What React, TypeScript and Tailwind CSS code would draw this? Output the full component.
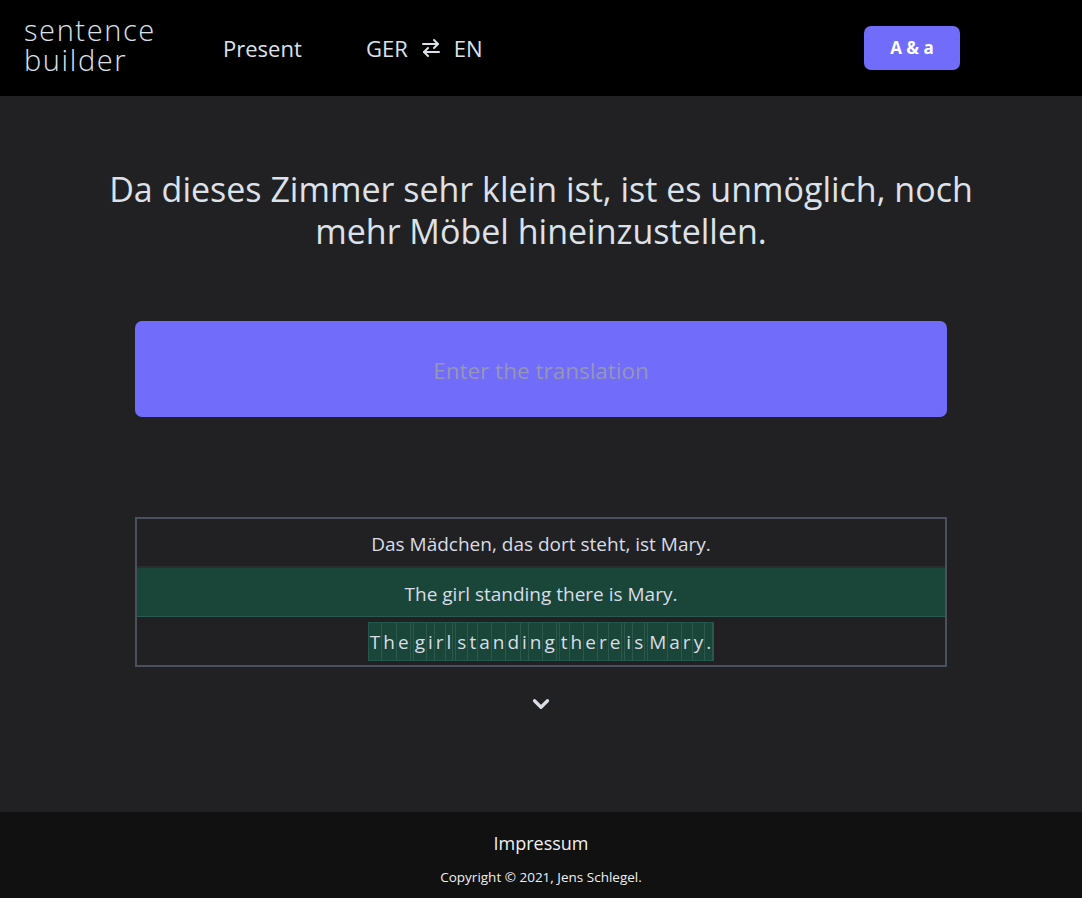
import React from "react";

const sentence = "The girl standing there is Mary.";

export default function App() {
  return (
    <div className="min-h-[898px] flex flex-col bg-[#212123] text-[#d8dde6]" style={{ fontFamily: '"Open Sans", "Noto Sans", sans-serif' }}>
      <header className="h-[96px] bg-black flex items-center shrink-0">
        <div className="ml-[24px] w-[199px] leading-[30px] text-[29px] font-light text-[#dde2ea] tracking-[1.6px] pb-[6px]" style={{ fontFamily: '"Open Sans", sans-serif' }}>
          <div>sentence</div>
          <div>builder</div>
        </div>
        <div className="text-[22px] text-[#dde2ea] w-[143px]">Present</div>
        <div className="flex items-center text-[22px] text-[#dde2ea] gap-[11px]">
          <span>GER</span>
          <svg width="24" height="24" viewBox="0 0 24 24" fill="none" stroke="currentColor" strokeWidth="2" strokeLinecap="round" strokeLinejoin="round">
            <path d="M4 8h15" />
            <path d="M15 4l4 4-4 4" />
            <path d="M20 16H5" />
            <path d="M9 12l-4 4 4 4" />
          </svg>
          <span>EN</span>
        </div>
        <button className="ml-auto mr-[122px] w-[96px] h-[44px] rounded-[7px] bg-[#716cf9] text-white font-bold text-[17px]">A &amp; a</button>
      </header>

      <main className="flex-1 flex flex-col items-center">
        <h1 className="mt-[72px] text-[34px] leading-[42px] text-center text-[#dde2ea] w-[900px]">
          Da dieses Zimmer sehr klein ist, ist es unmöglich, noch mehr Möbel hineinzustellen.
        </h1>
        <div className="mt-[69px] w-[812px] h-[96px] rounded-[7px] bg-[#716cf9] flex items-center justify-center">
          <span className="text-[22.5px] text-[#9696b6] pt-[4px]">Enter the translation</span>
        </div>
        <div className="mt-[100px] w-[812px] border-2 border-[#4a505c] flex flex-col">
          <div className="h-[49px] flex items-center justify-center text-[19px] border-b-2 border-[#2b2c2e] pt-[4px]">
            Das Mädchen, das dort steht, ist Mary.
          </div>
          <div className="h-[49px] flex items-center justify-center text-[19px] bg-[#1a4639] border-b border-[#2a5a52] pt-[4px]">
            The girl standing there is Mary.
          </div>
          <div className="h-[48px] flex items-center justify-center">
            <div className="flex h-[39px] bg-[#1a4639] border border-[#24584c]">
              {sentence.split("").map((c, i) => (
                <span key={i} className={`flex items-center justify-center border-r border-[#2a5a4e] text-[19px] pt-[3px] ${c === " " ? "w-[3px]" : "px-[1px]"}`}>
                  {c === " " ? "" : c}
                </span>
              ))}
            </div>
          </div>
        </div>
        <div className="mt-[24px] text-[#d8dde6]">
          <svg width="26" height="26" viewBox="0 0 24 24" fill="none" stroke="currentColor" strokeWidth="3" strokeLinecap="round" strokeLinejoin="round">
            <path d="M6 9l6 6 6-6" />
          </svg>
        </div>
      </main>

      <footer className="h-[86px] bg-[#111111] flex flex-col items-center shrink-0">
        <div className="mt-[18px] text-[18px] text-[#f0f0f0]">Impressum</div>
        <div className="mt-[10px] text-[13.5px] text-[#f0f0f0]">Copyright © 2021, Jens Schlegel.</div>
      </footer>
    </div>
  );
}
